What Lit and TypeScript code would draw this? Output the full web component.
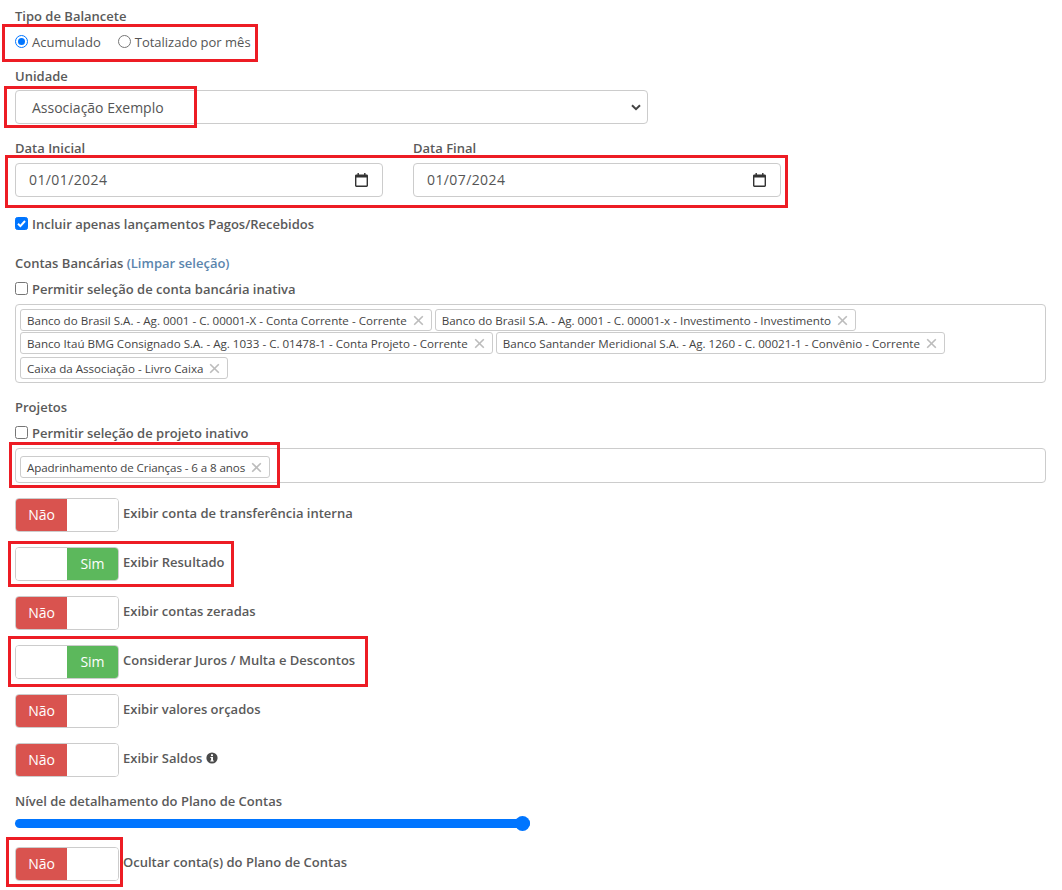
import { LitElement, html, css } from "lit";
import { customElement } from "lit/decorators.js";

const bank = [
  ["Banco do Brasil S.A. - Ag. 0001 - C. 00001-X - Conta Corrente - Corrente", "Banco do Brasil S.A. - Ag. 0001 - C. 00001-x - Investimento - Investimento"],
  ["Banco Itaú BMG Consignado S.A. - Ag. 1033 - C. 01478-1 - Conta Projeto - Corrente", "Banco Santander Meridional S.A. - Ag. 1260 - C. 00021-1 - Convênio - Corrente"],
  ["Caixa da Associação - Livro Caixa"],
];

@customElement("app-root")
export class AppRoot extends LitElement {
  static styles = css`
    :host { display: block; position: relative; height: 890px; overflow: hidden; background: #fff; font-family: "Open Sans", sans-serif; font-size: 13px; color: #555; }
    .page { padding: 7px 16px 0 15px; }
    .lbl { display: block; font-weight: 600; line-height: 18px; height: 18px; color: #5a5a5a; }
    .radios { display: flex; align-items: center; height: 18px; margin-top: 8px; }
    .opt { display: flex; align-items: center; color: #555; }
    .opt + .opt { margin-left: 17px; }
    .radio { width: 13px; height: 13px; border-radius: 50%; border: 1px solid #767676; box-sizing: border-box; margin-right: 4px; position: relative; top: -1px; }
    .radio.on { border: 1px solid #0075ff; padding: 2px; background: #0075ff content-box; }
    .unit { margin-top: 16px; }
    .field { box-sizing: border-box; height: 34px; border: 1px solid #ccc; border-radius: 4px; display: flex; align-items: center; background: #fff; }
    .select { width: 633px; margin-top: 5px; padding: 0 6px 0 16px; font-size: 14px; justify-content: space-between; color: #555; }
    .dates { display: flex; gap: 30px; margin-top: 15px; }
    .date { width: 368px; }
    .date .field { margin-top: 6px; padding: 0 14px 1px 13px; font-size: 14px; justify-content: space-between; letter-spacing: .4px; }
    .check { display: flex; align-items: center; font-weight: 600; height: 18px; color: #5a5a5a; }
    .box { width: 13px; height: 13px; box-sizing: border-box; border: 1px solid #767676; border-radius: 2.5px; margin-right: 4px; background: #fff; position: relative; top: -1px; }
    .box.on { background: #0075ff; border-color: #0075ff; display: flex; align-items: center; justify-content: center; }
    .c1 { margin-top: 18px; }
    .bank-title { margin-top: 21px; }
    .link { color: #5b85ad; }
    .c2 { margin-top: 8px; }
    .multi { box-sizing: border-box; width: 1031px; margin-top: 6px; border: 1px solid #ccc; border-radius: 4px; padding: 4px; }
    .bank-box { height: 79px; }
    .proj-box { height: 35px; padding-top: 7px; margin-top: 6px; }
    .row { display: flex; gap: 3px; height: 22px; margin-bottom: 1px; }
    .row.last { margin-top: 3px; }
    .chip { box-sizing: border-box; height: 22px; border: 1px solid #ccc; border-radius: 3px; padding: 0 7px 0 6px; display: flex; align-items: center; font-size: 11.6px; color: #444; white-space: nowrap; background: #fff; }
    .chip svg { margin-left: 6px; }
    .chip.tight { letter-spacing: -.1px; }
    .proj-title { margin-top: 15px; }
    .c3 { margin-top: 8px; }
    .toggles { margin-top: 15px; display: flex; flex-direction: column; gap: 15px; }
    .tg-row { display: flex; align-items: flex-start; height: 34px; }
    .tg { box-sizing: border-box; width: 104px; height: 34px; border: 1px solid #ccc; border-radius: 4px; display: flex; overflow: hidden; flex: none; }
    .tg span { box-sizing: border-box; width: 51px; height: 32px; padding-bottom: 2px; display: flex; align-items: center; justify-content: center; font-size: 14px; font-weight: 500; color: #fff; background: #fff; }
    .tg span + span { flex: 1; }
    .tg .no { background: #d9534f; }
    .tg .yes { background: #5cb85c; }
    .tg-text { margin-left: 4px; margin-top: 6px; font-weight: 600; line-height: 18px; color: #5a5a5a; display: flex; align-items: center; gap: 4px; }
    .slider-lbl { margin-top: 15px; }
    .slider { width: 515px; height: 9px; margin-top: 9px; background: #0075ff; border-radius: 5px; position: relative; }
    .thumb { position: absolute; right: 0; top: -3px; width: 15px; height: 15px; border-radius: 50%; background: #0075ff; }
    .last-tg { margin-top: 19px; }
    .mark { position: absolute; box-sizing: border-box; border: 3px solid #ed1c24; pointer-events: none; }
  `;

  private x() {
    return html`<svg width="11" height="11" viewBox="0 0 11 11"><path d="M1.200 1.200l8.600 8.600M9.800 1.200l-8.600 8.600" stroke="#bcbcbc" stroke-width="1.600" fill="none"/></svg>`;
  }
  private chip(t: string, cls = "") {
    return html`<div class="chip ${cls}">${t}${this.x()}</div>`;
  }
  private cal() {
    return html`<svg width="13" height="14" viewBox="0 0 13 14"><path fill="#333" fill-rule="evenodd" d="M2.500 0h1.400v1.400h5.200V0h1.400v1.400h1.200c.7 0 1.300.6 1.300 1.300v9.900c0 .7-.6 1.400-1.300 1.400H1.300c-.7 0-1.300-.7-1.300-1.400V2.700c0-.7.6-1.300 1.300-1.300h1.200zM1.400 4.600v8h10.200v-8z"/></svg>`;
  }
  private toggle(on: boolean, text: string, extra: unknown = "") {
    return html`<div class="tg-row">
      <div class="tg">${on ? html`<span></span><span class="yes">Sim</span>` : html`<span class="no">Não</span><span></span>`}</div>
      <div class="tg-text">${text}${extra}</div>
    </div>`;
  }
  render() {
    const info = html`<svg width="12" height="12" viewBox="0 0 12 12"><circle cx="6" cy="6" r="5.600" fill="#4a4a4a"/><rect x="5" y="2.300" width="2" height="1.800" fill="#fff"/><path d="M4.300 5h2.700v3.600h.8v1H4.300v-1h.8V6h-.8z" fill="#fff"/></svg>`;
    return html`
      <div class="page">
        <span class="lbl">Tipo de Balancete</span>
        <div class="radios">
          <div class="opt"><span class="radio on"></span>Acumulado</div>
          <div class="opt"><span class="radio"></span>Totalizado por mês</div>
        </div>
        <span class="lbl unit">Unidade</span>
        <div class="field select">
          <span>Associação Exemplo</span>
          <svg width="10" height="7" viewBox="0 0 10 7"><path d="M1 1.200l4 4 4-4" stroke="#444" stroke-width="2" fill="none"/></svg>
        </div>
        <div class="dates">
          <div class="date"><span class="lbl">Data Inicial</span><div class="field"><span>01/01/2024</span>${this.cal()}</div></div>
          <div class="date"><span class="lbl">Data Final</span><div class="field"><span>01/07/2024</span>${this.cal()}</div></div>
        </div>
        <div class="check c1"><span class="box on"><svg width="11" height="11" viewBox="0 0 11 11"><path d="M2 5.700l2.400 2.400L9 3" stroke="#fff" stroke-width="2" fill="none"/></svg></span>Incluir apenas lançamentos Pagos/Recebidos</div>
        <span class="lbl bank-title">Contas Bancárias <span class="link">(Limpar seleção)</span></span>
        <div class="check c2"><span class="box"></span>Permitir seleção de conta bancária inativa</div>
        <div class="multi bank-box">
          ${bank.map((r, i) => html`<div class="row ${i === 2 ? "last" : ""}">${r.map((t) => this.chip(t))}</div>`)}
        </div>
        <span class="lbl proj-title">Projetos</span>
        <div class="check c3"><span class="box"></span>Permitir seleção de projeto inativo</div>
        <div class="multi proj-box"><div class="row">${this.chip("Apadrinhamento de Crianças - 6 a 8 anos", "tight")}</div></div>
        <div class="toggles">
          ${this.toggle(false, "Exibir conta de transferência interna")}
          ${this.toggle(true, "Exibir Resultado")}
          ${this.toggle(false, "Exibir contas zeradas")}
          ${this.toggle(true, "Considerar Juros / Multa e Descontos")}
          ${this.toggle(false, "Exibir valores orçados")}
          ${this.toggle(false, "Exibir Saldos", info)}
        </div>
        <span class="lbl slider-lbl">Nível de detalhamento do Plano de Contas</span>
        <div class="slider"><div class="thumb"></div></div>
        <div class="last-tg">${this.toggle(false, "Ocultar conta(s) do Plano de Contas")}</div>
      </div>
      <div class="mark" style="left:2px;top:24px;width:256px;height:38px"></div>
      <div class="mark" style="left:4px;top:86px;width:193px;height:42px"></div>
      <div class="mark" style="left:5px;top:155px;width:783px;height:53px"></div>
      <div class="mark" style="left:9px;top:442px;width:271px;height:46px"></div>
      <div class="mark" style="left:8px;top:541px;width:226px;height:46px"></div>
      <div class="mark" style="left:8px;top:636px;width:360px;height:51px"></div>
      <div class="mark" style="left:6px;top:837px;width:117px;height:50px"></div>
    `;
  }
}
